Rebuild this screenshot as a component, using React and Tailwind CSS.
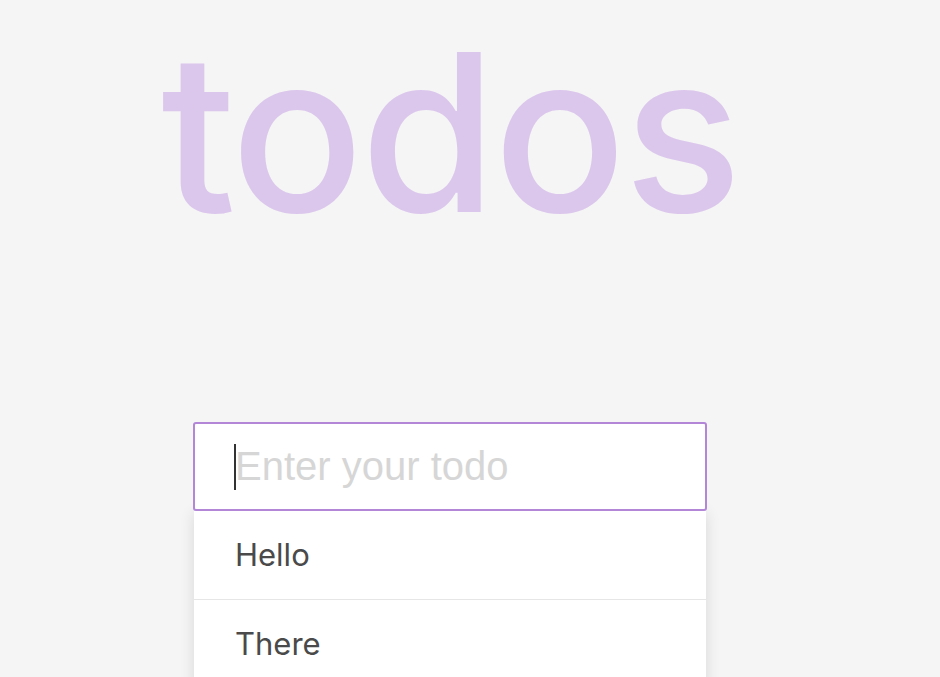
import React from 'react';

const todos = ['Hello', 'There'];

export default function App() {
  return (
    <div className="min-h-screen bg-[#f5f5f5] overflow-hidden">
      <div className="w-[512px] ml-[194px]">
        <div className="w-[660px] -ml-[74px] flex justify-center">
          <h1
            className="text-[220px] leading-[1.2] font-medium text-[#dcc7ec] tracking-[-3px] select-none"
            style={{ fontFamily: 'Inter, "Noto Sans", sans-serif' }}
          >
            todos
          </h1>
        </div>

        <div className="mt-[158px] relative -mx-px">
          <input
            type="text"
            placeholder="Enter your todo"
            className="block w-full h-[89px] bg-white border-2 border-[#b386d8] rounded-[3px] pl-10 pr-4 text-[40px] text-[#4a4a4a] placeholder:text-[#d6d6d6] outline-none"
            style={{ fontFamily: '"Liberation Sans", Arial, sans-serif' }}
          />
          <span className="absolute left-[41px] top-[22px] w-[2px] h-[46px] bg-[#333]" />
        </div>

        <ul className="bg-white shadow-[0_2px_14px_rgba(0,0,0,0.12)]">
          {todos.map((todo) => (
            <li
              key={todo}
              className="h-[89px] flex items-center pl-[41px] border-b border-[#e6e6e6] text-[31px] text-[#4a4a4a]"
              style={{ fontFamily: 'Inter, "Noto Sans", sans-serif' }}
            >
              {todo}
            </li>
          ))}
        </ul>
      </div>
    </div>
  );
}
